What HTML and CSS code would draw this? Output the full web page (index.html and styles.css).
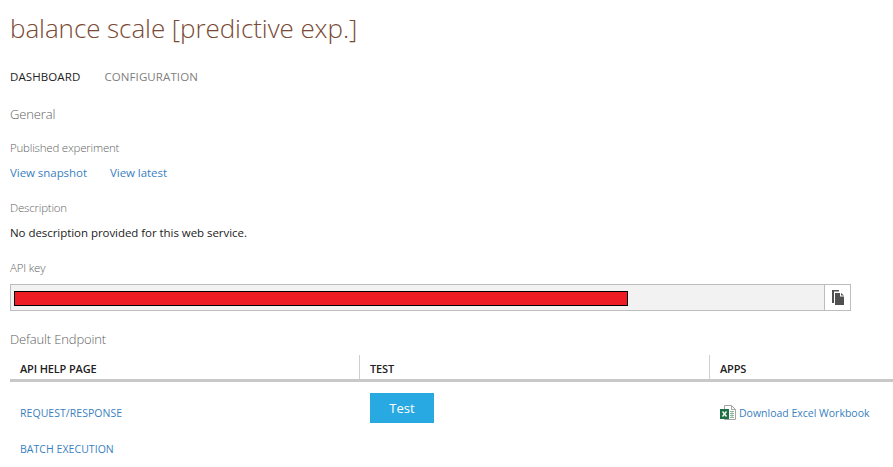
FILE: index.html
```html
<!DOCTYPE html>
<html lang="en">
<head>
<meta charset="utf-8">
<title>balance scale [predictive exp.]</title>
<link rel="stylesheet" href="styles.css">
</head>
<body>
<main class="page">
  <h1 class="title">balance scale [predictive exp.]</h1>
  <nav class="tabs">
    <span class="tab tab-active">DASHBOARD</span>
    <span class="tab">CONFIGURATION</span>
  </nav>
  <h2 class="section general">General</h2>
  <div class="label published">Published experiment</div>
  <div class="links">
    <a class="link" href="#">View snapshot</a>
    <a class="link" href="#">View latest</a>
  </div>
  <div class="label description">Description</div>
  <p class="text">No description provided for this web service.</p>
  <div class="label apikey">API key</div>
  <div class="keybox">
    <div class="keyfield"><div class="redact"></div></div>
    <button class="copy" aria-label="Copy">
      <svg width="12" height="15" viewBox="0 0 12 15"><path fill="#505050" d="M0 0h7v1.500H2V13H0z"/><path fill="#505050" d="M3 3h5v3.500h4V15H3z"/><path fill="#505050" d="M9 3l3 2.500H9z"/></svg>
    </button>
  </div>
  <h2 class="section endpoint">Default Endpoint</h2>
  <div class="grid">
    <div class="head">API HELP PAGE</div>
    <div class="head head-div">TEST</div>
    <div class="head head-div">APPS</div>
    <div class="col">
      <a class="ep" href="#">REQUEST/RESPONSE</a>
      <a class="ep" href="#">BATCH EXECUTION</a>
    </div>
    <div class="col col-div"><button class="test">Test</button></div>
    <div class="col col-div">
      <a class="excel" href="#">
        <svg width="17" height="17" viewBox="0 0 17 17">
          <path fill="#fff" stroke="#a5a5a5" d="M4.500 1.500h7l4 4v10h-11z"/>
          <path fill="none" stroke="#a5a5a5" d="M11.500 1.500v4h4"/>
          <path fill="none" stroke="#8fb79f" d="M10 7.500h4M10 9.500h4M10 11.500h4M10 13.500h4M12 7v7"/>
          <rect x="0" y="5" width="9" height="10" fill="#1e7145"/>
          <path fill="none" stroke="#fff" stroke-width="1.300" d="M2.500 7.500l4 5M6.500 7.500l-4 5"/>
        </svg>
        <span>Download Excel Workbook</span>
      </a>
    </div>
  </div>
</main>
</body>
</html>
```
FILE: styles.css
```css
* { box-sizing: border-box; }
html, body { margin: 0; padding: 0; background: #fff; }
body { font-family: "Open Sans", "Liberation Sans", sans-serif; overflow: hidden; }
.page { padding-left: 10px; height: 467px; }
.title { margin: 0; padding-top: 10px; font-size: 26px; line-height: 36px; font-weight: 300; color: #7a4a35; letter-spacing: -0.07px; }
.tabs { display: flex; gap: 24px; margin-top: 23px; font-size: 11.500px; line-height: 16px; letter-spacing: 0.1px; }
.tab { color: #808080; }
.tab-active { color: #222; }
.section { margin: 0; font-weight: 300; font-size: 13px; line-height: 18px; color: #5f5f5f; letter-spacing: -0.15px; }
.general { margin-top: 20px; }
.label { font-size: 11.500px; line-height: 16px; color: #666; font-weight: 300; letter-spacing: -0.2px; }
.published { margin-top: 17px; }
.links { display: flex; gap: 23px; margin-top: 9px; font-size: 11.500px; line-height: 16px; letter-spacing: -0.05px; }
.link { color: #3a7fc0; text-decoration: none; }
.description { margin-top: 19px; }
.text { margin: 9px 0 0; font-size: 11.500px; line-height: 16px; color: #222; letter-spacing: -0.05px; }
.apikey { margin-top: 19px; }
.keybox { display: flex; width: 841px; height: 27px; margin-top: 8px; border: 1px solid #bdbdbd; }
.keyfield { flex: 1; background: #f2f2f2; padding: 6px 3px; }
.redact { width: 614px; height: 15px; background: #ed1c24; border: 1px solid #000; }
.copy { width: 26px; padding: 0; background: #fff; border: 0; border-left: 1px solid #bdbdbd; display: flex; align-items: center; justify-content: center; }
.endpoint { margin-top: 19px; }
.grid { display: grid; grid-template-columns: 349px 350px 1fr; margin-top: 7px; }
.head { padding: 6px 10px 0; height: 27px; border-bottom: 3px solid #c8c8c8; font-size: 11px; line-height: 16px; font-weight: 600; color: #222; letter-spacing: -0.15px; position: relative; }
.head-div { padding-left: 11px; }
.head-div::before { content: ""; position: absolute; left: 0; top: 0; bottom: 0; width: 1px; background: #cfcfcf; }
.col { display: flex; flex-direction: column; align-items: flex-start; padding: 11px 10px 0; }
.col-div { padding-left: 11px; }
.ep { margin-top: 12px; margin-bottom: 8px; font-size: 10.500px; line-height: 16px; color: #3a7fc0; text-decoration: none; letter-spacing: 0.05px; }
.test { width: 64px; height: 30px; border: 0; padding: 0; background: #29a9e1; color: #fff; font: 13px "Open Sans", sans-serif; }
.excel { display: flex; align-items: center; gap: 2px; margin-top: 11px; font-size: 10.500px; line-height: 16px; color: #3a7fc0; text-decoration: none; }
```
